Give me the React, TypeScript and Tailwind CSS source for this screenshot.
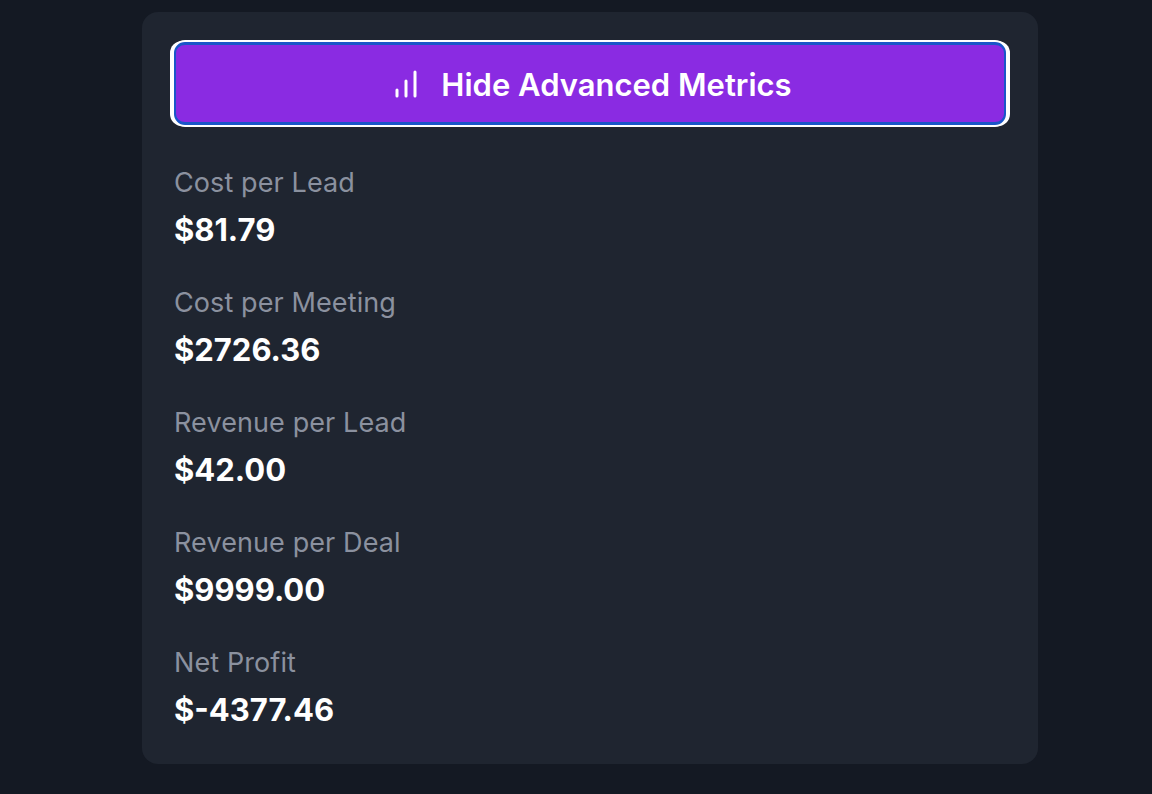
import React from "react";

const rows = [
  ["Cost per Lead", "$81.79"],
  ["Cost per Meeting", "$2726.36"],
  ["Revenue per Lead", "$42.00"],
  ["Revenue per Deal", "$9999.00"],
  ["Net Profit", "$-4377.46"],
];

export default function App() {
  return (
    <div className="h-[794px] overflow-hidden bg-[#141923] flex justify-start items-start pt-3 pl-[142px] font-['Inter',sans-serif]">
      <div className="w-[896px] h-[752px] bg-[#1f2530] rounded-[16px] px-8 pt-[30px]">
        <button className="w-full h-[83px] bg-[#8a2be2] rounded-[11px] text-white text-[31px] font-semibold border-x-2 border-y-[3.5px] border-[#1a56c8] shadow-[0_0_0_2px_#ffffff,-3px_0_0_1px_#ffffff,3px_0_0_1px_#ffffff] flex items-center justify-center gap-[17px]">
          <svg width="36" height="36" viewBox="0 0 24 24" fill="none" stroke="currentColor" strokeWidth="2" strokeLinecap="round" strokeLinejoin="round">
            <path d="M6 20v-4" /><path d="M12 20V10" /><path d="M18 20V4" />
          </svg>
          <span className="mt-[3px]">Hide Advanced Metrics</span>
        </button>
        <div className="mt-[38px] flex flex-col gap-[24px]">
          {rows.map(([k, v]) => (
            <div key={k} className="h-[96px]">
              <div className="text-[#8b919f] text-[27px] tracking-[0.1px] leading-[40px]">{k}</div>
              <div className="text-white text-[31px] font-bold leading-[48px] mt-[3px]">{v}</div>
            </div>
          ))}
        </div>
      </div>
    </div>
  );
}
